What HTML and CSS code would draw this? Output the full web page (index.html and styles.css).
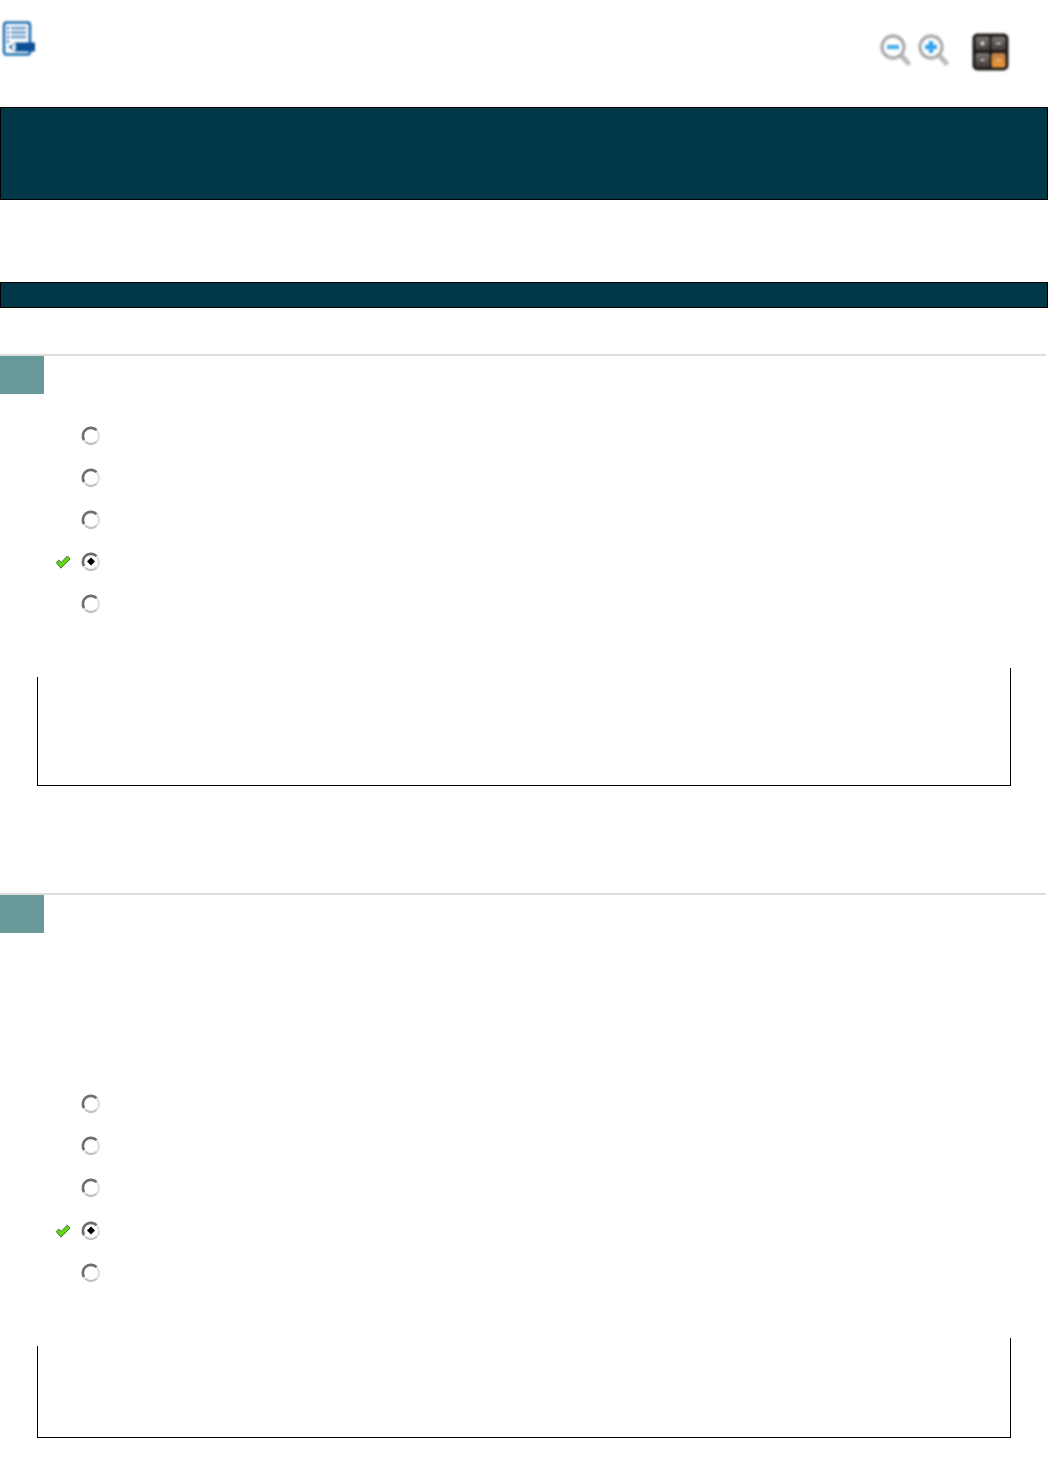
FILE: index.html
```html
<!DOCTYPE html>
<html lang="en">
<head>
<meta charset="utf-8">
<title>Quiz review</title>
<link rel="stylesheet" href="styles.css">
</head>
<body>
<svg class="defs" width="0" height="0" aria-hidden="true">
  <defs>
    <symbol id="radio" viewBox="0 0 20 20">
      <circle cx="10" cy="10" r="8" fill="#fff" stroke="#e2e2e2" stroke-width="2.4"/>
      <path d="M15.5 4.2A8 8 0 0 0 3 14" fill="none" stroke="#6e6e6e" stroke-width="2.6"/>
      <path d="M4.5 15.8A8 8 0 0 0 15.5 15.8" fill="none" stroke="#c0c0c0" stroke-width="1.8"/>
    </symbol>
    <symbol id="radio-on" viewBox="0 0 20 20">
      <circle cx="10" cy="10" r="8" fill="#fff" stroke="#e2e2e2" stroke-width="2.4"/>
      <path d="M15.5 4.2A8 8 0 0 0 3 14" fill="none" stroke="#6e6e6e" stroke-width="2.6"/>
      <path d="M4.5 15.8A8 8 0 0 0 15.5 15.8" fill="none" stroke="#c0c0c0" stroke-width="1.8"/>
      <path d="M10 5.4L14 9.5L10 13.6L6 9.5Z" fill="#000"/>
    </symbol>
    <symbol id="check" viewBox="0 0 16 16">
      <path d="M1.2 8.6L6 14.2L15 5L12.4 2L6.2 8.4L3.8 6Z" fill="#62d811" stroke="#47703a" stroke-width="1" stroke-linejoin="round"/>
    </symbol>
  </defs>
</svg>

<header class="toolbar">
  <svg class="icon-notes" width="34" height="36" viewBox="0 0 34 36" aria-hidden="true">
    <rect x="2" y="1.5" width="26" height="32" rx="2.5" fill="#f6f9fc" stroke="#1f70ae" stroke-width="2.6"/>
    <path d="M9 7H24M9 11.5H24M9 16H24" stroke="#6c9dcb" stroke-width="2.4"/>
    <path d="M5 7H7M5 11.5H7M5 16H7M5 20.5H7" stroke="#1f5f9e" stroke-width="2.2"/>
    <path d="M14 21.5H33V30.5H14Z" fill="#0b4f98"/>
    <path d="M7 26L14 21.5V30.5Z" fill="#f4f7fb" stroke="#2f6fa8" stroke-width="0.8"/>
    <path d="M7 26L10 24.2V27.8Z" fill="#0b4f98"/>
  </svg>
  <div class="tools">
    <svg class="icon-zoom" width="32" height="34" viewBox="0 0 32 34" aria-hidden="true">
      <path d="M20 21L28 30" stroke="#bdbdbd" stroke-width="5" stroke-linecap="round"/>
      <circle cx="13" cy="14" r="11" fill="#fff" stroke="#adadad" stroke-width="3.4"/>
      <path d="M7 14H19" stroke="#4fb0ec" stroke-width="4.4"/>
    </svg>
    <svg class="icon-zoom" width="32" height="34" viewBox="0 0 32 34" aria-hidden="true">
      <path d="M20 21L28 30" stroke="#bdbdbd" stroke-width="5" stroke-linecap="round"/>
      <circle cx="13" cy="14" r="11" fill="#fff" stroke="#adadad" stroke-width="3.4"/>
      <path d="M7 14H19M13 8V20" stroke="#35a4ec" stroke-width="4.4"/>
    </svg>
    <svg class="icon-calc" width="37" height="38" viewBox="0 0 37 38" aria-hidden="true">
      <defs>
        <linearGradient id="key-gray" x1="0" y1="0" x2="0" y2="1">
          <stop offset="0" stop-color="#7b7672"/>
          <stop offset="1" stop-color="#403b38"/>
        </linearGradient>
        <linearGradient id="key-orange" x1="0" y1="0" x2="0" y2="1">
          <stop offset="0" stop-color="#b98045"/>
          <stop offset="1" stop-color="#f09a35"/>
        </linearGradient>
      </defs>
      <rect x="0.5" y="0.5" width="36" height="37" rx="5" fill="#1f1a18"/>
      <rect x="3.5" y="3.5" width="14" height="14" rx="2" fill="url(#key-gray)"/>
      <rect x="19.5" y="3.5" width="14" height="14" rx="2" fill="url(#key-gray)"/>
      <rect x="3.5" y="20" width="14" height="14.5" rx="2" fill="url(#key-gray)"/>
      <rect x="19.5" y="20" width="14" height="14.5" rx="2" fill="url(#key-orange)"/>
      <path d="M8 10.5H13M10.5 8V13M24 10.5H29M8.5 27H12.5" stroke="#e4e0dc" stroke-width="1.6"/>
      <path d="M24 27H29" stroke="#f5c98f" stroke-width="1.4"/>
    </svg>
  </div>
</header>

<div class="band band-title"></div>
<div class="band band-sub"></div>

<section class="question">
  <div class="number"></div>
  <ul class="options">
    <li class="option"><svg class="radio"><use href="#radio"/></svg></li>
    <li class="option"><svg class="radio"><use href="#radio"/></svg></li>
    <li class="option"><svg class="radio"><use href="#radio"/></svg></li>
    <li class="option"><svg class="check"><use href="#check"/></svg><svg class="radio"><use href="#radio-on"/></svg></li>
    <li class="option"><svg class="radio"><use href="#radio"/></svg></li>
  </ul>
  <div class="explain"><div class="explain-side"></div></div>
</section>

<section class="question question-long">
  <div class="number"></div>
  <ul class="options">
    <li class="option"><svg class="radio"><use href="#radio"/></svg></li>
    <li class="option"><svg class="radio"><use href="#radio"/></svg></li>
    <li class="option"><svg class="radio"><use href="#radio"/></svg></li>
    <li class="option"><svg class="check"><use href="#check"/></svg><svg class="radio"><use href="#radio-on"/></svg></li>
    <li class="option"><svg class="radio"><use href="#radio"/></svg></li>
  </ul>
  <div class="explain"><div class="explain-side"></div></div>
</section>
</body>
</html>
```
FILE: styles.css
```css
html, body {
  margin: 0;
  padding: 0;
  background: #fff;
  font-family: "Liberation Sans", sans-serif;
}
.defs {
  position: absolute;
}
.toolbar {
  height: 107px;
  box-sizing: border-box;
  padding: 21px 39px 0 2px;
  display: flex;
  justify-content: space-between;
  align-items: flex-start;
}
.tools {
  display: flex;
  align-items: flex-start;
  gap: 6px;
  padding-top: 12px;
}
.icon-notes, .icon-zoom, .icon-calc {
  display: block;
  filter: blur(0.8px);
}
.icon-calc {
  margin-left: 16px;
}
.band {
  box-sizing: border-box;
  background: #013848;
  border: 1px solid #000;
}
.band-title {
  height: 93px;
}
.band-sub {
  height: 26px;
  margin-top: 82px;
}
.question {
  margin-top: 46px;
  margin-right: 2px;
  border-top: 2px solid #ddd;
}
.question-long {
  margin-top: 107px;
}
.number {
  width: 44px;
  height: 38px;
  background: #689a9a;
}
.options {
  list-style: none;
  margin: 21px 0 0;
  padding: 0;
}
.question-long .options {
  margin-top: 150px;
}
.option {
  height: 42px;
  position: relative;
  display: flex;
  align-items: center;
  padding-left: 81px;
}
.question-long .option {
  height: 42.2px;
}
.radio {
  width: 20px;
  height: 20px;
  display: block;
  filter: blur(0.5px);
}
.check {
  position: absolute;
  left: 55px;
  top: 13px;
  width: 16px;
  height: 16px;
  filter: blur(0.4px);
}
.explain {
  box-sizing: border-box;
  display: flex;
  width: 974px;
  height: 118px;
  margin: 43px 0 0 37px;
  border-right: 1px solid #000;
  border-bottom: 1px solid #000;
}
.question-long .explain {
  height: 100px;
  margin-top: 44px;
}
.explain-side {
  margin-top: 9px;
  border-left: 1px solid #000;
}
.question-long .explain-side {
  margin-top: 8px;
}
```
